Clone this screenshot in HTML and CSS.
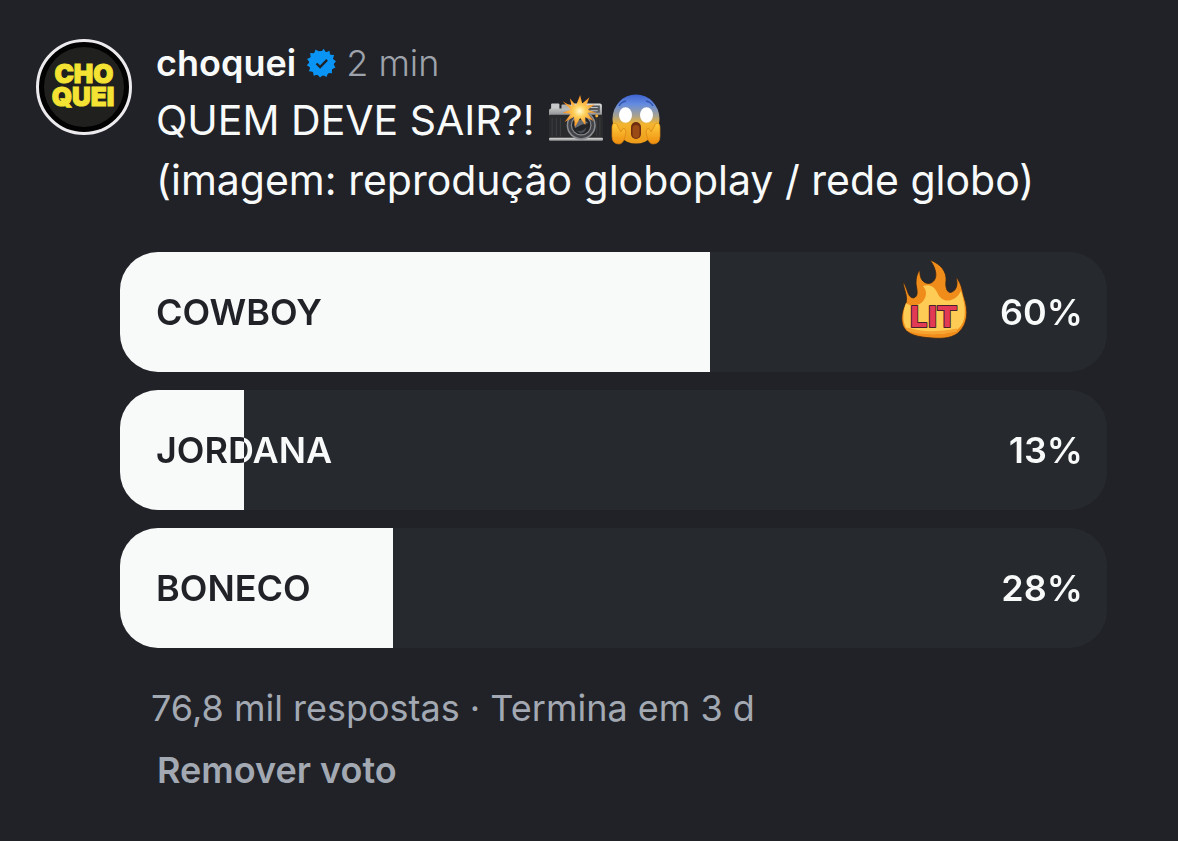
FILE: index.html
```html
<!DOCTYPE html>
<html lang="pt-BR">
<head>
    <meta charset="UTF-8">
    <meta name="viewport" content="width=device-width, initial-scale=1.0">
    <title>choquei</title>
    <link rel="stylesheet" href="styles.css">
</head>
<body>

<article class="post">
    <header class="post-header">
        <svg class="avatar" viewBox="0 0 96 96" role="img" aria-label="choquei">
            <circle cx="48" cy="48" r="46.5" fill="#020202" stroke="#eceaec" stroke-width="3"/>
            <circle cx="48" cy="48" r="40" fill="#20211f"/>
            <text class="avatar-text"><tspan x="48" y="44">CHO</tspan><tspan x="47" y="67">QUEI</tspan></text>
        </svg>
        <div class="post-text">
            <div class="byline">
                <strong class="username">choquei</strong>
                <svg class="verified" viewBox="0 0 30 30" role="img" aria-label="Verificado">
                    <path fill="#0a95f6" d="M15 4 17.8 .8 19.7 4.4 23.5 2.8 24 6.8 28.1 7 26.9 10.9 30 13.2 27.4 16.2 29.5 19.6 25.8 21.2 26 25.3 22 25.1 20.5 29 17 27 14 29.6 11.5 26.4 7.7 27.8 7 23.8 2.9 23.3 4.3 19.5 .8 17.2 3.6 14.2 1 11 4.7 9.2 4.1 5.1 8.1 5.3 9.6 1.5 13 3.6z"/>
                    <circle cx="15.5" cy="15.2" r="12.3" fill="#0a95f6"/>
                    <path d="M10.5 15.5l3.6 3.5 7-7.2" fill="none" stroke="#202228" stroke-width="2.4"/>
                </svg>
                <span class="time">2 min</span>
            </div>
            <p class="caption">
                QUEM DEVE SAIR?!
                <svg class="emoji camera" viewBox="0 0 54 50" role="img" aria-label="Câmera com flash">
                    <defs>
                        <linearGradient id="silver" x1="0" y1="0" x2="0" y2="1">
                            <stop offset="0" stop-color="#e0e0de"/>
                            <stop offset="1" stop-color="#8d8e90"/>
                        </linearGradient>
                        <radialGradient id="flash">
                            <stop offset="0" stop-color="#fffbd0"/>
                            <stop offset=".35" stop-color="#ffd05a"/>
                            <stop offset="1" stop-color="#f6861d"/>
                        </radialGradient>
                    </defs>
                    <rect x="3" y="9" width="8" height="7" rx="1" fill="#c8c9ca"/>
                    <rect x="13" y="10" width="9" height="6" rx="1" fill="#b2b3b5"/>
                    <path d="M1 16q0-2 2-2h16l4-5h27q2 0 2 2v10H1z" fill="url(#silver)"/>
                    <rect x="1" y="20" width="52" height="25" rx="1" fill="#2a2b2d"/>
                    <path d="M4 23v18M8 23v18M12 23v18M47 23v18M50 23v18" stroke="#3b3d40"/>
                    <rect x="1" y="42" width="52" height="3" rx="1" fill="url(#silver)"/>
                    <rect x="39" y="11" width="11" height="7" fill="#575a5d"/>
                    <path d="M41 13h7M41 16h7" stroke="#bfc2c4"/>
                    <circle cx="32" cy="30" r="14" fill="#8b8d91"/>
                    <circle cx="32" cy="30" r="12.5" fill="#414348"/>
                    <circle cx="32" cy="30" r="10" fill="#88898d"/>
                    <circle cx="32" cy="30" r="8.8" fill="#232528"/>
                    <path d="M25 29q7-8 14-1-7 1-13 5z" fill="#666a70"/>
                    <path d="M27 35q6 2 10-3-1 6-6 6z" fill="#484d55"/>
                    <circle cx="47" cy="21" r="1.5" fill="#ecae38"/>
                    <path fill="url(#flash)" d="M31 1l2 8 7-6-3 8 8-1-7 5 9 3-9 0 6 8-8-4 0 8-5-7-5 9-1-10-9 5 6-8-8-1 8-3-8-8 9 5-2-8 6 7z"/>
                </svg><svg class="emoji scream" viewBox="0 0 52 52" role="img" aria-label="Rosto gritando de medo">
                    <defs>
                        <linearGradient id="face" x1="0" y1="0" x2="0" y2="1">
                            <stop offset="0" stop-color="#3f63d1"/>
                            <stop offset=".2" stop-color="#648ce0"/>
                            <stop offset=".44" stop-color="#a9a28c"/>
                            <stop offset=".6" stop-color="#f3b52f"/>
                            <stop offset="1" stop-color="#ee9b18"/>
                        </linearGradient>
                        <linearGradient id="hand" x1="0" y1="0" x2="0" y2="1">
                            <stop offset="0" stop-color="#ffcf3f"/>
                            <stop offset="1" stop-color="#ee8d0d"/>
                        </linearGradient>
                    </defs>
                    <ellipse cx="26" cy="25" rx="23.5" ry="24.5" fill="url(#face)"/>
                    <ellipse cx="15.5" cy="21" rx="6.5" ry="7.8" fill="#fff"/>
                    <ellipse cx="36.5" cy="21" rx="6.5" ry="7.8" fill="#fff"/>
                    <path d="M9 12q2-4 7-5M43 12q-2-4-7-5" fill="none" stroke="#3455ad" stroke-width="1.5"/>
                    <rect x="21" y="28" width="10" height="17" rx="5" fill="#6e2d12"/>
                    <rect x="22.5" y="31" width="7" height="13" rx="3.5" fill="#9a4a15"/>
                    <path d="M2 33q0-4 3-4 2 0 3 4l3 5q2-5 4-3 2 2 0 8-2 7-6 7-7 0-7-8zM50 33q0-4-3-4-2 0-3 4l-3 5q-2-5-4-3-2 2 0 8 2 7 6 7 7 0 7-8z" fill="url(#hand)" stroke="#d98211" stroke-width=".7"/>
                </svg><br>
                (imagem: reprodução globoplay / rede globo)
            </p>
        </div>
    </header>

    <ul class="poll">
        <li>
            <button type="button" class="option" style="--share: 59.8%">
                <span class="option-text">
                    <span class="name">COWBOY</span>
                    <svg class="sticker" viewBox="0 0 68 80" role="img" aria-label="LIT">
                        <path fill="#ef8c1a" stroke="#33251a" stroke-width=".8" d="M3 22C8 28 7 37 13 38C20 37 16 27 16 23C16 18 17 13 20 10C19 20 25 25 31 23C39 19 36 8 30 0C41 4 47 12 46 21C45 29 48 34 52 32C57 30 58 23 56 17C62 24 62 31 64 37C69 52 67 64 60 71C54 78 43 79 32 78C18 77 7 75 3 66C0 57 3 48 6 43C8 36 4 30 3 22z"/>
                        <path fill="#fecb55" d="M6 43C14 49 25 44 26 34C26 29 24 28 23 26C30 24 34 27 37 32C40 39 45 42 51 40C58 38 60 32 61 31C67 50 66 62 58 69C48 76 17 76 6 68C2 60 3 52 6 43z"/>
                        <path d="M7 69q20 7 50 1" fill="none" stroke="#f5a431" stroke-width="3"/>
                        <text class="sticker-text" x="33" y="67">LIT</text>
                    </svg>
                    <span class="percent">60%</span>
                </span>
            </button>
        </li>
        <li>
            <button type="button" class="option" style="--share: 12.6%">
                <span class="option-text">
                    <span class="name">JORDANA</span>
                    <span class="percent">13%</span>
                </span>
            </button>
        </li>
        <li>
            <button type="button" class="option" style="--share: 27.7%">
                <span class="option-text">
                    <span class="name">BONECO</span>
                    <span class="percent">28%</span>
                </span>
            </button>
        </li>
    </ul>

    <footer class="post-footer">
        <p class="summary">76,8 mil respostas · Termina em 3 d</p>
        <button type="button" class="remove">Remover voto</button>
    </footer>
</article>

</body>
</html>
```
FILE: styles.css
```css
* {
    box-sizing: border-box;
}
body {
    margin: 0;
    background-color: #202228;
    color: #f8fafa;
    font-family: Inter, sans-serif;
}
button {
    border: none;
    background: none;
    font-family: inherit;
    cursor: pointer;
}
.post {
    padding: 36px;
}
.post-header {
    display: flex;
    gap: 24px;
}
.avatar {
    width: 96px;
    height: 96px;
    margin-top: 3px;
    flex-shrink: 0;
}
.avatar-text {
    fill: #f5e334;
    stroke: #f5e334;
    stroke-width: 1px;
    font-size: 26px;
    font-weight: 900;
    text-anchor: middle;
}
.post-text {
    flex: 1;
}
.byline {
    display: flex;
    align-items: center;
    gap: 10px;
    font-size: 36px;
    line-height: 54px;
}
.username {
    font-weight: 600;
}
.verified {
    width: 30px;
    height: 30px;
}
.time {
    color: #9ea3ab;
    font-weight: 300;
}
.caption {
    margin: 0;
    font-size: 41px;
    line-height: 60px;
}
.emoji {
    height: 52px;
    margin-top: -4px;
    margin-bottom: 4px;
    vertical-align: middle;
}
.camera {
    width: 56px;
    margin-left: 2px;
}
.scream {
    width: 52px;
    margin-left: 6px;
}
.poll {
    display: flex;
    flex-direction: column;
    gap: 18px;
    list-style: none;
    margin: 42px 35px 0 84px;
    padding: 0;
}
.option {
    display: block;
    width: 100%;
    padding: 0;
    border-radius: 38px;
    overflow: hidden;
    background: linear-gradient(to right, #f8fafa var(--share), #26292e var(--share));
}
/* same split as the bar, inverted and clipped to the letters */
.option-text {
    display: flex;
    align-items: center;
    height: 120px;
    padding: 0 24px 0 36px;
    font-size: 36px;
    font-weight: 600;
    color: transparent;
    background: linear-gradient(to right, #202228 var(--share), #f8fafa var(--share));
    -webkit-background-clip: text;
    background-clip: text;
}
.name {
    flex: 1;
    text-align: left;
}
.sticker {
    width: 68px;
    height: 80px;
    margin: 0 32px 24px 0;
}
.sticker-text {
    fill: #e23a55;
    stroke: #46202b;
    stroke-width: 2px;
    stroke-linejoin: round;
    paint-order: stroke;
    font-family: "DejaVu Sans", sans-serif;
    font-size: 28px;
    font-weight: 700;
    text-anchor: middle;
}
.post-footer {
    padding: 36px 0 0 115px;
    color: #a3a9b2;
    font-size: 36px;
}
.summary {
    margin: 0;
    font-weight: 400;
    line-height: 48px;
}
.remove {
    margin-top: 14px;
    padding: 0 6px;
    color: inherit;
    font-size: inherit;
    font-weight: 600;
    line-height: 48px;
}
```
